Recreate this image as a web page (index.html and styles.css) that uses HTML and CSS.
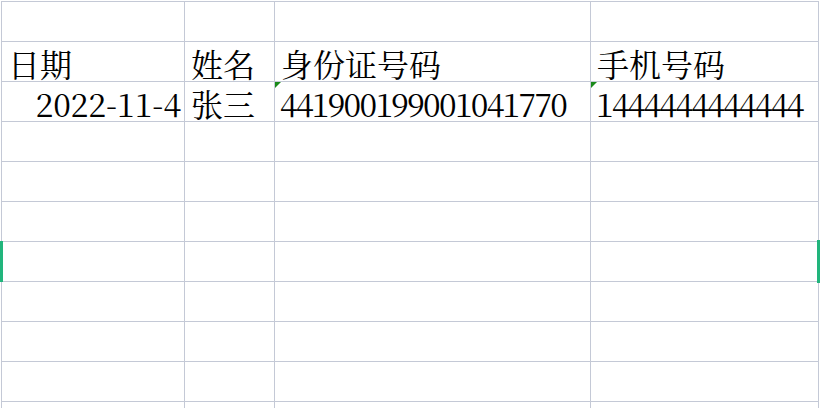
FILE: index.html
```html
<!DOCTYPE html>
<html>
<head>
<meta charset="utf-8">
<title>Sheet</title>
<link rel="stylesheet" href="styles.css">
</head>
<body>
<div class="frame">
<div class="sheet">
  <div class="cell"></div><div class="cell"></div><div class="cell"></div><div class="cell"></div>
  <div class="cell">日期</div><div class="cell">姓名</div><div class="cell">身份证号码</div><div class="cell">手机号码</div>
  <div class="cell right">2022-11-4</div><div class="cell">张三</div><div class="cell num flag">441900199001041770</div><div class="cell num flag">1444444444444</div>
  <div class="cell"></div><div class="cell"></div><div class="cell"></div><div class="cell"></div>
  <div class="cell"></div><div class="cell"></div><div class="cell"></div><div class="cell"></div>
  <div class="cell"></div><div class="cell"></div><div class="cell"></div><div class="cell"></div>
  <div class="cell"></div><div class="cell"></div><div class="cell"></div><div class="cell"></div>
  <div class="cell"></div><div class="cell"></div><div class="cell"></div><div class="cell"></div>
  <div class="cell"></div><div class="cell"></div><div class="cell"></div><div class="cell"></div>
  <div class="cell"></div><div class="cell"></div><div class="cell"></div><div class="cell"></div>
  <div class="cell"></div><div class="cell"></div><div class="cell"></div><div class="cell"></div>
</div>
</div>
<div class="mark mark-left"></div>
<div class="mark mark-right"></div>
</body>
</html>
```
FILE: styles.css
```css
html, body {
  margin: 0;
  padding: 0;
  background: #ffffff;
  overflow: hidden;
}
body {
  width: 820px;
  height: 408px;
  position: relative;
}
.frame {
  height: 408px;
  overflow: hidden;
}
.sheet {
  margin: 1px 0 0 1px;
  display: grid;
  grid-template-columns: 183px 90px 316px 228px;
  grid-auto-rows: 40px;
  border-top: 1px solid #c4c9d6;
  border-left: 1px solid #c4c9d6;
  width: 817px;
}
.cell {
  box-sizing: border-box;
  border-right: 1px solid #c4c9d6;
  border-bottom: 1px solid #c4c9d6;
  display: flex;
  align-items: flex-end;
  padding: 0 3px 0 6px;
  color: #000;
  white-space: nowrap;
  position: relative;
  font-family: "Noto Serif CJK SC", "Noto Sans CJK SC", serif;
  font-size: 32px;
  line-height: 36px;
}
.num {
  letter-spacing: -1.7px;
  padding-left: 5px;
}
.right {
  justify-content: flex-end;
}
.flag::before {
  content: "";
  position: absolute;
  left: 0;
  top: 0;
  width: 0;
  height: 0;
  border-top: 6px solid #1a8a1a;
  border-right: 6px solid transparent;
}
.mark {
  position: absolute;
  width: 3px;
  background: #21b57c;
}
.mark-left {
  left: 0;
  top: 241px;
  height: 41px;
}
.mark-right {
  left: 817px;
  top: 240px;
  height: 43px;
}
```
